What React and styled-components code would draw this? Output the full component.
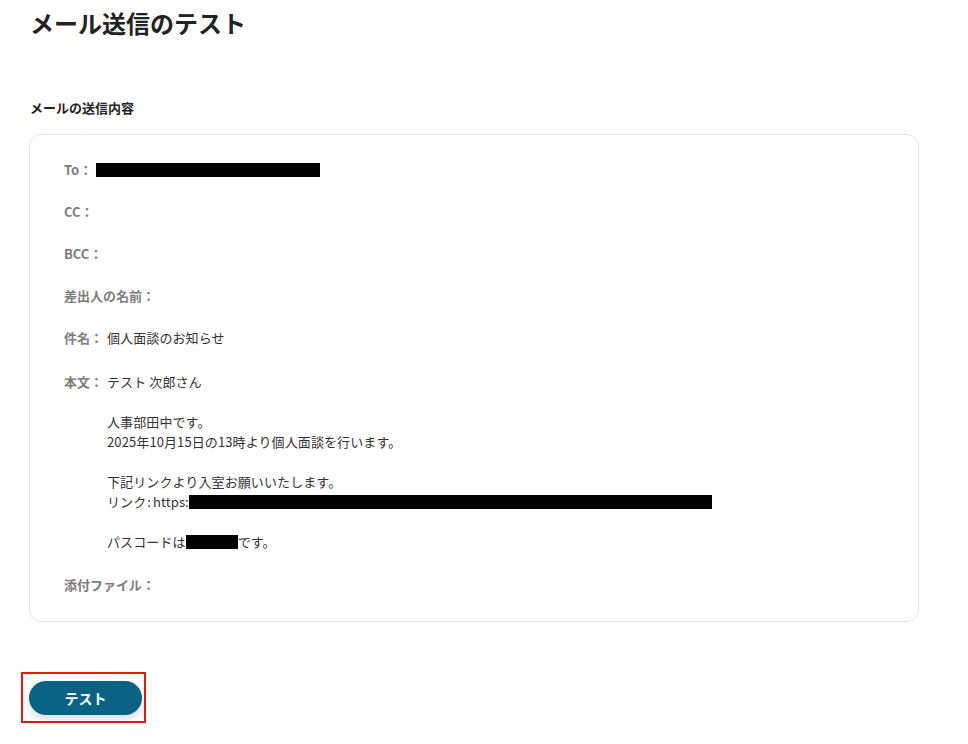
import React from 'react';
import styled, { createGlobalStyle } from 'styled-components';

const GlobalStyle = createGlobalStyle`
  body {
    margin: 0;
    background: #ffffff;
    font-family: "Noto Sans CJK JP", "Noto Sans", sans-serif;
    color: #333;
  }
`;

const Page = styled.div`
  padding: 7px 49px 20px 29px;
`;

const Title = styled.h1`
  margin: 0 0 0 1px;
  font-size: 24px;
  line-height: 32px;
  font-weight: 700;
  color: #222;
`;

const SectionLabel = styled.h2`
  margin: 59px 0 16px 1px;
  font-size: 13px;
  line-height: 20px;
  font-weight: 700;
  color: #222;
`;

const Card = styled.div`
  border: 1px solid #e4e4e7;
  border-radius: 12px;
  padding: 25px 34px 26px;
  display: flex;
  flex-direction: column;
  gap: 22px;
`;

const Row = styled.div`
  display: flex;
  gap: 4px;
  font-size: 13px;
  line-height: 20px;
  margin-top: ${(p) => p.$shift || 0}px;
`;

const Label = styled.span`
  color: #7d7d7d;
  font-weight: 700;
  flex-shrink: 0;
`;

const Value = styled.div`
  color: #333;
  white-space: pre-wrap;
  letter-spacing: 0.1px;
`;

const Colon = styled.span`
  margin: 0 2px 0 1px;
`;

const Redact = styled.span`
  display: inline-block;
  vertical-align: middle;
  width: ${(p) => p.w}px;
  height: 14px;
  background: #000;
  margin-top: -3px;
`;

const ButtonArea = styled.div`
  margin-top: 50px;
`;

const Highlight = styled.div`
  display: inline-block;
  border: 2px solid #e8170f;
  padding: 7px 2px 6px 6px;
  margin-left: -8px;
`;

const Button = styled.button`
  width: 113px;
  height: 34px;
  border: none;
  border-radius: 17px;
  background: #0a6385;
  color: #fff;
  font-family: "Noto Sans CJK JP", "Noto Sans", sans-serif;
  font-size: 14px;
  font-weight: 700;
  box-shadow: 0 4px 10px rgba(30, 60, 90, 0.18);
  display: block;
`;

const rows = [
  { label: 'To：', value: <Redact w={224} /> },
  { label: 'CC：' },
  { label: 'BCC：' },
  { label: '差出人の名前：' },
  { label: '件名：', value: '個人面談のお知らせ' },
];

export default function App() {
  return (
    <Page>
      <GlobalStyle />
      <Title>メール送信のテスト</Title>
      <SectionLabel>メールの送信内容</SectionLabel>
      <Card>
        {rows.map((r) => (
          <Row key={r.label}>
            <Label>{r.label}</Label>
            {r.value && <Value>{r.value}</Value>}
          </Row>
        ))}
        <Row $shift={2}>
          <Label>本文：</Label>
          <Value>
            テスト 次郎さん{'\n\n'}人事部田中です。{'\n'}2025年10月15日の13時より個人面談を行います。{'\n\n'}下記リンクより入室お願いいたします。{'\n'}リンク<Colon>:</Colon>https:<Redact w={523} />{'\n\n'}パスコードは<Redact w={52} />です。
          </Value>
        </Row>
        <Row $shift={1}>
          <Label>添付ファイル：</Label>
        </Row>
      </Card>
      <ButtonArea>
        <Highlight>
          <Button>テスト</Button>
        </Highlight>
      </ButtonArea>
    </Page>
  );
}
